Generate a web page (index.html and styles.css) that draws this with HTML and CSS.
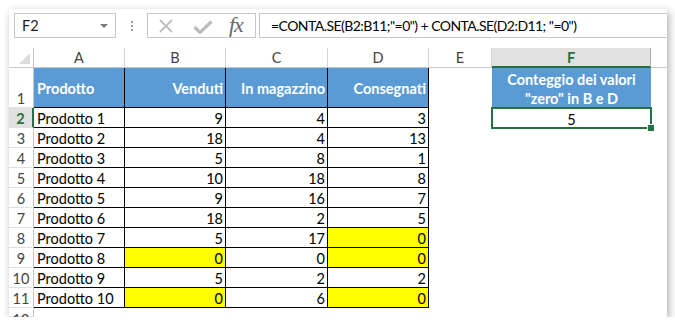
FILE: index.html
```html
<!DOCTYPE html>
<html lang="it">
<head>
<meta charset="utf-8">
<title>CONTA.SE</title>
<link rel="stylesheet" href="styles.css">
</head>
<body>
<div class="win">
  <div class="fbar">
    <div class="namebox"><span class="nb-text">F2</span><span class="nb-arrow"></span></div>
    <div class="dots"><i></i><i></i><i></i></div>
    <div class="fxbox">
      <svg class="ic-x" width="16" height="16" viewBox="0 0 16 16"><path d="M2 2 L14 14 M14 2 L2 14" stroke="#bdbdbd" stroke-width="1.8" fill="none"/></svg>
      <svg class="ic-ok" width="20" height="14" viewBox="0 0 20 14"><path d="M1.5 7 L7 12.5 L18.5 1.5" stroke="#bdbdbd" stroke-width="3.2" fill="none"/></svg>
      <span class="ic-fx">fx</span>
    </div>
    <div class="formula">=CONTA.SE(B2:B11;"=0") + CONTA.SE(D2:D11; "=0")</div>
  </div>
  <div class="sheet">
    <div class="ch corner"><span class="tri"></span></div>
    <div class="ch">A</div><div class="ch">B</div><div class="ch">C</div><div class="ch">D</div><div class="ch">E</div><div class="ch sel">F</div><div class="ch last"></div>

    <div class="rh r1">1</div>
    <div class="t hd l">Prodotto</div><div class="t hd r">Venduti</div><div class="t hd r">In magazzino</div><div class="t hd r">Consegnati</div>
    <div class="e"></div><div class="f1">Conteggio dei valori<br>"zero" in B e D</div><div class="e"></div>

    <div class="rh sel">2</div>
    <div class="t l">Prodotto 1</div><div class="t r">9</div><div class="t r">4</div><div class="t r">3</div>
    <div class="e"></div><div class="f2">5</div><div class="e"></div>

    <div class="rh">3</div>
    <div class="t l">Prodotto 2</div><div class="t r">18</div><div class="t r">4</div><div class="t r">13</div>
    <div class="e"></div><div class="e"></div><div class="e"></div>

    <div class="rh">4</div>
    <div class="t l">Prodotto 3</div><div class="t r">5</div><div class="t r">8</div><div class="t r">1</div>
    <div class="e"></div><div class="e"></div><div class="e"></div>

    <div class="rh">5</div>
    <div class="t l">Prodotto 4</div><div class="t r">10</div><div class="t r">18</div><div class="t r">8</div>
    <div class="e"></div><div class="e"></div><div class="e"></div>

    <div class="rh">6</div>
    <div class="t l">Prodotto 5</div><div class="t r">9</div><div class="t r">16</div><div class="t r">7</div>
    <div class="e"></div><div class="e"></div><div class="e"></div>

    <div class="rh">7</div>
    <div class="t l">Prodotto 6</div><div class="t r">18</div><div class="t r">2</div><div class="t r">5</div>
    <div class="e"></div><div class="e"></div><div class="e"></div>

    <div class="rh">8</div>
    <div class="t l">Prodotto 7</div><div class="t r">5</div><div class="t r">17</div><div class="t r y">0</div>
    <div class="e"></div><div class="e"></div><div class="e"></div>

    <div class="rh">9</div>
    <div class="t l">Prodotto 8</div><div class="t r y">0</div><div class="t r">0</div><div class="t r y">0</div>
    <div class="e"></div><div class="e"></div><div class="e"></div>

    <div class="rh">10</div>
    <div class="t l">Prodotto 9</div><div class="t r">5</div><div class="t r">2</div><div class="t r">2</div>
    <div class="e"></div><div class="e"></div><div class="e"></div>

    <div class="rh">11</div>
    <div class="t l">Prodotto 10</div><div class="t r y">0</div><div class="t r">6</div><div class="t r y">0</div>
    <div class="e"></div><div class="e"></div><div class="e"></div>

    <div class="rh r12">12</div>
    <div class="e"></div><div class="e"></div><div class="e"></div><div class="e"></div>
    <div class="e"></div><div class="e"></div><div class="e"></div>
  </div>
</div>
</body>
</html>
```

FILE: styles.css
```css
* { box-sizing: border-box; }
html, body { margin: 0; padding: 0; background: #fff; }
body {
  font-family: Lato, "Liberation Sans", sans-serif;
  font-size: 14.5px;
  color: #000;
}
.win {
  margin: 9px 0 0 9px;
  width: 658px;
  height: 308px;
  background: #fff;
  overflow: hidden;
  box-shadow: 2px 3px 8px rgba(0,0,0,0.32);
}
.fbar {
  display: flex;
  align-items: flex-start;
  height: 39px;
  padding: 4px 0 0 5px;
}
.namebox {
  width: 102px;
  height: 25px;
  border: 1px solid #c6c6c6;
  display: flex;
  align-items: center;
  justify-content: space-between;
  padding: 0 7px 0 7px;
}
.nb-text { font-size: 14.5px; color: #222; }
.nb-arrow {
  width: 0; height: 0;
  border-left: 4px solid transparent;
  border-right: 4px solid transparent;
  border-top: 4px solid #777;
  margin-top: 1px;
}
.dots {
  width: 31px;
  height: 25px;
  display: flex;
  flex-direction: column;
  align-items: center;
  justify-content: center;
  gap: 2px;
}
.dots i {
  display: block;
  width: 2px;
  height: 2px;
  background: #9a9a9a;
}
.fxbox {
  width: 109px;
  height: 25px;
  border: 1px solid #c6c6c6;
  display: flex;
  align-items: center;
  padding-left: 10px;
  margin-right: 3px;
}
.ic-x { margin-right: 19px; }
.ic-ok { margin-right: 16px; margin-top: 2px; }
.ic-fx {
  font-family: "Liberation Serif", "DejaVu Serif", serif;
  font-style: italic;
  font-size: 22px;
  color: #666;
  letter-spacing: -1px;
  margin-top: -2px;
}
.formula {
  flex: 1;
  height: 25px;
  border: 1px solid #c6c6c6;
  border-right: none;
  padding-left: 11px;
  line-height: 23px;
  font-size: 14px;
  letter-spacing: -0.55px;
  white-space: nowrap;
  color: #000;
}
.sheet {
  display: grid;
  grid-template-columns: 25px 91px 101px 102px 101px 63px 159px 1fr;
  grid-template-rows: 20px 40px repeat(10, 20px) 9px;
}
.ch {
  border-right: 1px solid #d4d4d4;
  border-bottom: 1px solid #c6c6c6;
  display: flex;
  align-items: center;
  justify-content: center;
  color: #444;
  font-size: 14.5px;
}
.ch.corner { position: relative; border-right: 1px solid #c6c6c6; }
.tri {
  position: absolute;
  right: 3px;
  bottom: 3px;
  width: 0; height: 0;
  border-left: 11px solid transparent;
  border-bottom: 11px solid #dcdcdc;
}
.ch.sel {
  background: #e1e1e1;
  color: #217346;
  font-weight: bold;
  border-right: 1px solid #ababab;
  border-bottom: 2px solid #217346;
}
.ch.last { border-right: none; }
.rh {
  border-right: 1px solid #c6c6c6;
  border-bottom: 1px solid #e1e1e1;
  display: flex;
  align-items: center;
  justify-content: center;
  color: #444;
  font-size: 14.5px;
  padding-top: 2px;
}
.rh.r1 { align-items: flex-end; padding-bottom: 0; }
.rh.r12 { align-items: flex-start; padding-top: 3px; }
.rh.sel {
  background: #e1e1e1;
  color: #217346;
  font-weight: bold;
  border-right: 2px solid #217346;
}
.t {
  border-right: 1px solid #000;
  border-bottom: 1px solid #000;
  display: flex;
  align-items: center;
  padding: 2px 2px 0 3px;
  white-space: nowrap;
}
.t.l { justify-content: flex-start; }
.t.r { justify-content: flex-end; }
.t.hd {
  background: #5b9bd5;
  color: #fff;
  font-weight: bold;
  padding-top: 1px;
}
.t.y { background: #ffff00; }
.f1 {
  background: #5b9bd5;
  color: #fff;
  font-weight: bold;
  text-align: center;
  line-height: 19px;
  padding-top: 2px;
}
.f2 {
  outline: 2px solid #217346;
  outline-offset: -1px;
  position: relative;
  display: flex;
  align-items: center;
  justify-content: center;
  padding-top: 2px;
}
.f2::after {
  content: "";
  position: absolute;
  right: -4px;
  bottom: -4px;
  width: 6px;
  height: 6px;
  background: #217346;
  border: 1px solid #fff;
  box-sizing: content-box;
}
```
